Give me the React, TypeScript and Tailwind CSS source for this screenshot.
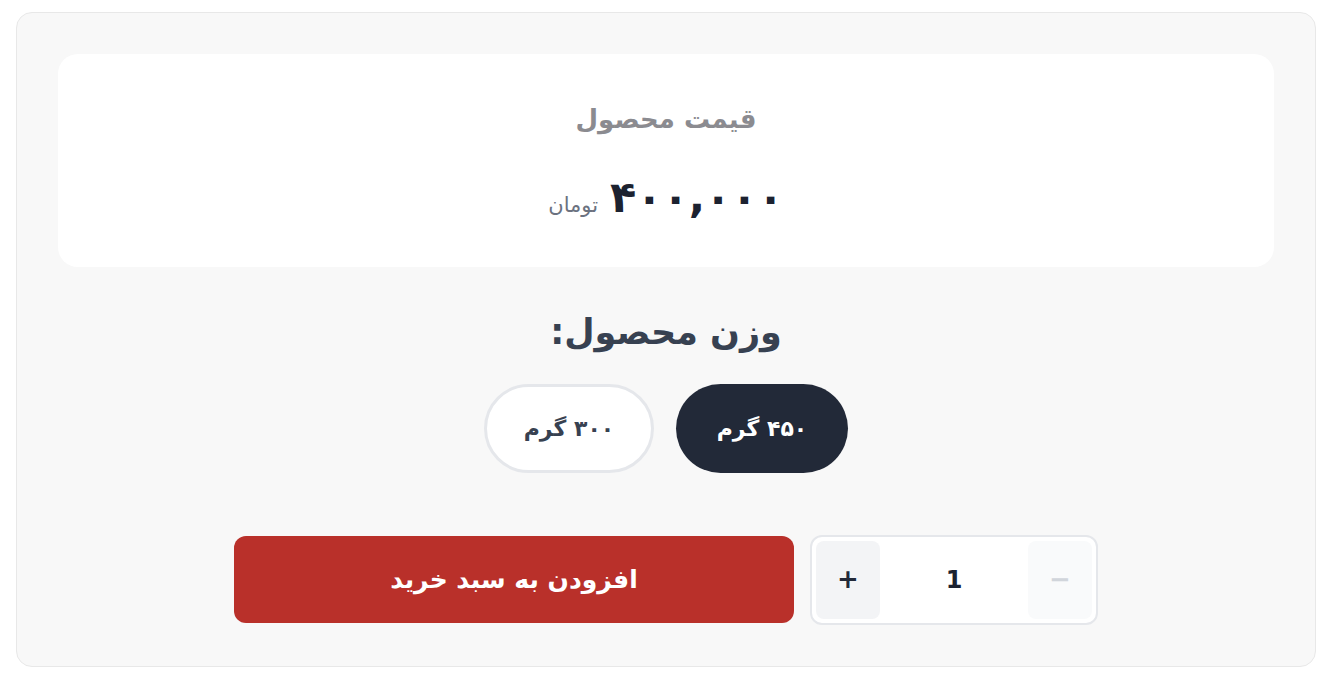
import { useState } from "react";

const weights = [
  { id: "450", label: "۴۵۰ گرم" },
  { id: "300", label: "۳۰۰ گرم" },
];

export default function App() {
  const [weight, setWeight] = useState("450");
  const [qty, setQty] = useState(1);

  return (
    <div
      dir="rtl"
      className="min-h-screen bg-white pl-4 pr-5 pt-3"
      style={{ fontFamily: '"DejaVu Sans", "Noto Sans", sans-serif' }}
    >
      <div className="rounded-2xl border border-[#e8e8e8] bg-[#f8f8f8] p-[41px] pb-[41px]">
        {/* Price */}
        <div className="flex h-[213px] flex-col items-center rounded-[20px] bg-white pt-[46px]">
          <h2 className="text-[26px] font-bold text-[#8b8b90]">قیمت محصول</h2>
          <div className="mt-[26px] flex items-baseline gap-3">
            <span className="text-[43px] font-bold tracking-wider text-[#1c2230]">۴۰۰,۰۰۰</span>
            <span className="text-[21px] text-[#6b7280]">تومان</span>
          </div>
        </div>

        {/* Weight */}
        <h3 className="mt-[39px] text-center text-[35px] font-bold text-[#374151]">وزن محصول:</h3>
        <div className="mt-[25px] flex justify-center gap-[22px]">
          {weights.map((w) => (
            <button
              key={w.id}
              onClick={() => setWeight(w.id)}
              className={
                weight === w.id
                  ? "h-[89px] w-[172px] rounded-full bg-[#222938] text-[22px] font-semibold text-white"
                  : "h-[89px] w-[170px] rounded-full border-[3px] border-[#e5e7eb] bg-white text-[22px] font-semibold text-[#374151]"
              }
            >
              {w.label}
            </button>
          ))}
        </div>

        {/* Actions */}
        <div className="mt-[62px] flex justify-center gap-4">
          <div className="flex h-[90px] w-[288px] items-center rounded-xl border-2 border-[#e5e7eb] bg-white p-1">
            <button
              onClick={() => setQty(qty + 1)}
              className="order-3 flex h-full w-16 items-center justify-center rounded-lg bg-[#f3f4f6] text-[26px] font-bold text-[#222938]"
            >
              +
            </button>
            <span className="order-2 flex-1 text-center text-[24px] font-bold text-[#1c2230]">{qty}</span>
            <button
              onClick={() => setQty(Math.max(1, qty - 1))}
              className="order-1 flex h-full w-16 items-center justify-center rounded-lg bg-[#f9fafb] text-[26px] font-bold text-[#d1d5db]"
            >
              −
            </button>
          </div>
          <button className="h-[87px] w-[560px] self-center rounded-xl bg-[#b9302a] text-[25px] font-bold text-white">
            افزودن به سبد خرید
          </button>
        </div>
      </div>
    </div>
  );
}
